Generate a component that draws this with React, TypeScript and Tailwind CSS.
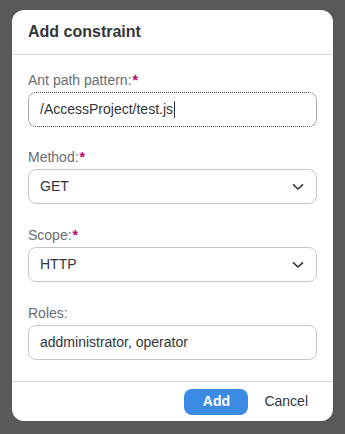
import React from 'react';

function Label({ text, required }: { text: string; required?: boolean }) {
  return (
    <div className="text-[14px] leading-[18px] text-[#6a6d70] mb-[3px]">
      {text}
      {required && <span className="text-[#bb0066] font-bold ml-[1px]">*</span>}
    </div>
  );
}

function Chevron() {
  return (
    <svg width="12" height="8" viewBox="0 0 12 8" fill="none">
      <path d="M1.5 1.8 6 6 10.5 1.8" stroke="#32363a" strokeWidth="1.6" strokeLinecap="round" strokeLinejoin="round" />
    </svg>
  );
}

function Select({ value }: { value: string }) {
  return (
    <div className="h-[35px] rounded-[8px] border border-[#c6c6c6] flex items-center justify-between pl-[11px] pr-[12px] text-[14px] text-[#32363a]">
      <span>{value}</span>
      <Chevron />
    </div>
  );
}

export default function App() {
  return (
    <div className="w-[345px] h-[434px] bg-[#595959] pt-[10px] pl-[12px] font-['Liberation_Sans',Arial,sans-serif]">
      <div className="w-[321px] h-[411px] bg-white rounded-[12px] flex flex-col overflow-hidden">
        <div className="h-[45px] shrink-0 border-b border-[#d9d9d9] flex items-center px-[16px]">
          <h1 className="text-[16px] font-bold text-[#32363a]">Add constraint</h1>
        </div>
        <div className="flex-1 px-[16px] pt-[16px]">
          <Label text="Ant path pattern:" required />
          <div className="h-[35px] rounded-[8px] border border-dotted border-[#555] flex items-center pl-[11px] text-[14px] text-[#32363a]">
            /AccessProject/test.js
            <span className="inline-block w-px h-[17px] bg-[#32363a] ml-[1px]" />
          </div>
          <div className="mt-[21px]">
            <Label text="Method:" required />
            <Select value="GET" />
          </div>
          <div className="mt-[22px]">
            <Label text="Scope:" required />
            <Select value="HTTP" />
          </div>
          <div className="mt-[22px]">
            <Label text="Roles:" />
            <div className="h-[35px] rounded-[8px] border border-[#c6c6c6] flex items-center pl-[11px] text-[14px] text-[#32363a]">
              addministrator, operator
            </div>
          </div>
        </div>
        <div className="h-[40px] shrink-0 border-t border-[#d9d9d9] flex items-center justify-end gap-[16px] pr-[25px]">
          <button className="h-[26px] w-[64px] rounded-[8px] bg-[#3b8ae4] text-white text-[14px] font-bold">Add</button>
          <button className="text-[14px] text-[#32363a]">Cancel</button>
        </div>
      </div>
    </div>
  );
}
